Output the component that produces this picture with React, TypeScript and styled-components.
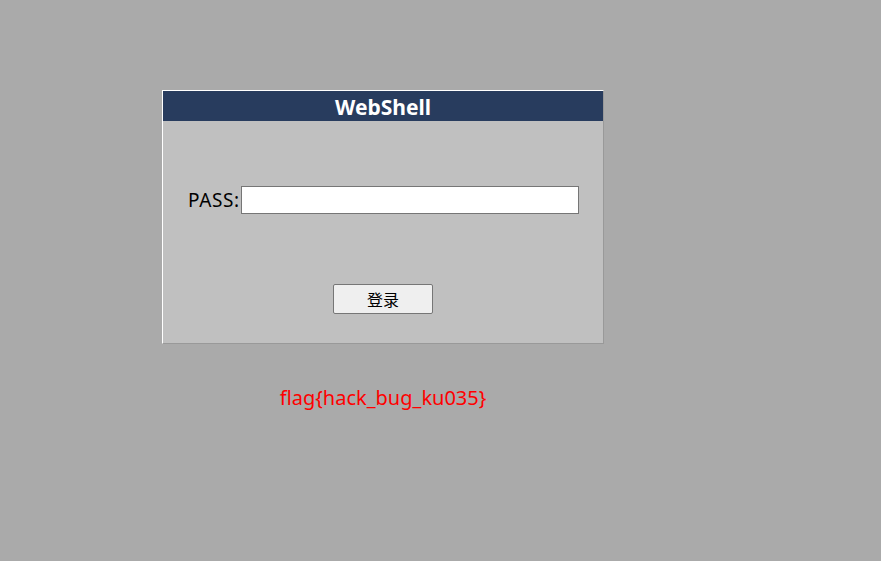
import { createGlobalStyle } from "styled-components";
import styled from "styled-components";

const GlobalStyle = createGlobalStyle`
    html, body {
        margin: 0;
        padding: 0;
        background: #aaaaaa;
        font-family: "Noto Sans", "Noto Sans CJK SC", sans-serif;
    }
`

const Page = styled.div`
    width: 881px;
    height: 561px;
    padding: 90px 0 0 162px;
    box-sizing: border-box;
`

const Panel = styled.div`
    width: 442px;
    box-sizing: border-box;
    border: 1px solid;
    border-color: #ffffff #999999 #999999 #ffffff;
    background: #c0c0c0;
`

const PanelHeader = styled.div`
    height: 30px;
    background: #283c5e;
    color: #ffffff;
    font-size: 21px;
    font-weight: 700;
    line-height: 32px;
    text-align: center;
`

const PanelBody = styled.div`
    display: flex;
    flex-direction: column;
    padding: 65px 23px 29px 25px;
`

const FieldRow = styled.div`
    display: flex;
    align-items: center;
    height: 28px;

    label {
        width: 53px;
        font-size: 19px;
        color: #000000;
        letter-spacing: 0.6px;
        white-space: nowrap;
    }
`

const PassInput = styled.input`
    width: 338px;
    height: 28px;
    box-sizing: border-box;
    border: 1px solid #767676;
    background: #ffffff;
    padding: 0 4px;
    font-size: 16px;
    outline: none;
`

const ButtonRow = styled.div`
    display: flex;
    justify-content: center;
    margin-top: 70px;
    padding-right: 2px;
`

const LoginButton = styled.button`
    width: 100px;
    height: 30px;
    box-sizing: border-box;
    border: 1px solid #767676;
    border-radius: 2px;
    background: #efefef;
    color: #000000;
    font-family: "Noto Sans CJK SC", sans-serif;
    font-size: 16px;
    padding: 0;
    cursor: pointer;
`

const Flag = styled.p`
    width: 442px;
    margin: 40px 0 0;
    text-align: center;
    color: #ff0000;
    font-size: 20px;
`

export default function App() {
    return (
        <>
            <GlobalStyle />
            <Page>
                <Panel>
                    <PanelHeader>WebShell</PanelHeader>
                    <PanelBody>
                        <FieldRow>
                            <label htmlFor="pass">PASS:</label>
                            <PassInput id="pass" type="password" />
                        </FieldRow>
                        <ButtonRow>
                            <LoginButton>登录</LoginButton>
                        </ButtonRow>
                    </PanelBody>
                </Panel>
                <Flag>flag{"{"}hack_bug_ku035{"}"}</Flag>
            </Page>
        </>
    );
}
